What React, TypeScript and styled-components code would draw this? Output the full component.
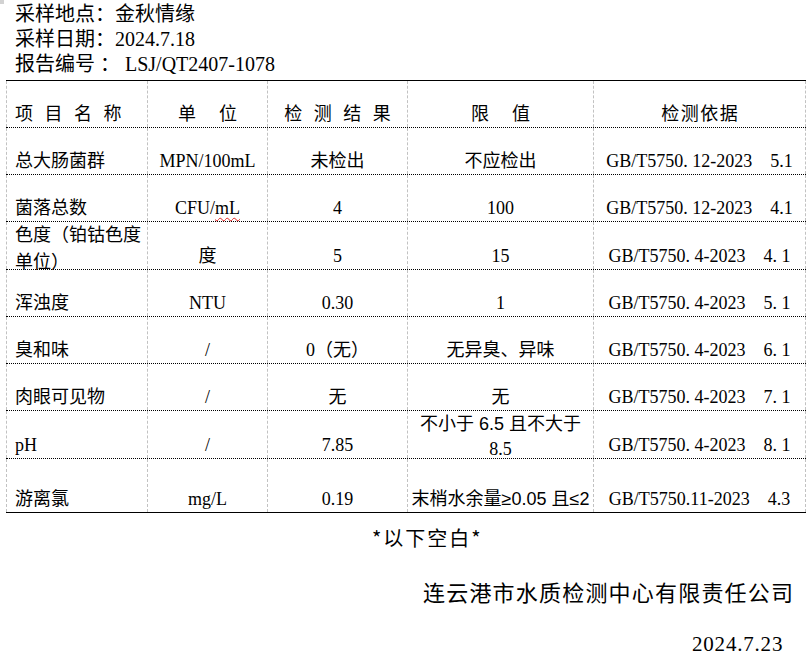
import React from 'react';
import styled, { createGlobalStyle } from 'styled-components';

const GlobalStyle = createGlobalStyle`
  html, body { margin: 0; padding: 0; background: #ffffff; }
  body {
    width: 812px;
    height: 661px;
    overflow: hidden;
    font-family: "Liberation Serif", "Noto Sans CJK SC", serif;
    color: #000000;
  }
`;

const Page = styled.div`
  position: relative;
  width: 812px;
  height: 661px;
  display: flex;
  flex-direction: column;
`;

const CornerMark = styled.div`
  position: absolute;
  left: 0;
  top: 0;
  width: 4px;
  height: 4px;
  background: #d2d2d2;
`;

const Info = styled.div`
  box-sizing: border-box;
  height: 80px;
  padding: 2px 0 0 15px;
  font-size: 20px;
  line-height: 25px;
`;

const InfoLine = styled.div`
  white-space: pre;
`;

const Table = styled.div`
  margin-left: 6px;
  width: 800px;
  border-top: 1px solid #000;
`;

const Row = styled.div<{ $h: number; $last?: boolean }>`
  display: grid;
  grid-template-columns: 141px 120px 140px 186px 213px;
  grid-template-rows: minmax(0, 1fr);
  box-sizing: border-box;
  height: ${p => p.$h}px;
  border-bottom: 1px ${p => (p.$last ? 'solid' : 'dotted')} #000;
`;

const Cell = styled.div<{ $left?: boolean; $top?: boolean; $lh?: number; $pt?: number }>`
  box-sizing: border-box;
  min-height: 0;
  border-left: 1px dashed #c2c2c2;
  &:last-child { border-right: 1px dashed #c2c2c2; }
  display: flex;
  flex-direction: column;
  justify-content: ${p => (p.$top ? 'flex-start' : 'flex-end')};
  align-items: ${p => (p.$left ? 'flex-start' : 'center')};
  padding-left: ${p => (p.$left ? '8px' : '0')};
  padding-top: ${p => p.$pt ?? 0}px;
  font-size: 18px;
  line-height: ${p => p.$lh ?? 26}px;
  white-space: pre;
  text-align: ${p => (p.$left ? 'left' : 'center')};
`;

const HeadLabel = styled.span<{ $ls: number; $center?: boolean }>`
  letter-spacing: ${p => p.$ls}px;
  padding-left: ${p => (p.$center ? p.$ls : 0)}px;
`;

const Spell = styled.span`
  text-decoration: underline wavy #e02020;
  text-decoration-thickness: 1px;
  text-underline-offset: 3px;
`;

const Sans = styled.span`
  font-family: "Liberation Sans", "Noto Sans CJK SC", sans-serif;
`;

const Footer = styled.div`
  display: flex;
  flex-direction: column;
  gap: 23px;
  padding-top: 10px;
`;

const FooterLine = styled.div<{ $x: number; $size: number; $ls: number; $sans?: boolean }>`
  padding-left: ${p => p.$x}px;
  font-size: ${p => p.$size}px;
  letter-spacing: ${p => p.$ls}px;
  line-height: 30px;
  white-space: pre;
  font-family: ${p =>
    p.$sans
      ? '"Noto Sans CJK SC", "Liberation Sans", sans-serif'
      : '"Liberation Serif", "Noto Sans CJK SC", serif'};
`;

type RowData = {
  h: number;
  name: React.ReactNode;
  nameTop?: boolean;
  unit: React.ReactNode;
  result: React.ReactNode;
  limit: React.ReactNode;
  limitTop?: boolean;
  method: string;
};

const rows: RowData[] = [
  { h: 47, name: '总大肠菌群', unit: 'MPN/100mL', result: '未检出', limit: '不应检出', method: 'GB/T5750. 12-2023    5.1' },
  { h: 47, name: '菌落总数', unit: <span>CFU/<Spell>mL</Spell></span>, result: '4', limit: '100', method: 'GB/T5750. 12-2023    4.1' },
  { h: 48, name: <>{'色度（铂钴色度'}<br />{'单位）'}</>, nameTop: true, unit: '度', result: '5', limit: '15', method: 'GB/T5750. 4-2023    4. 1' },
  { h: 47, name: '浑浊度', unit: 'NTU', result: '0.30', limit: '1', method: 'GB/T5750. 4-2023    5. 1' },
  { h: 47, name: '臭和味', unit: '/', result: '0（无）', limit: '无异臭、异味', method: 'GB/T5750. 4-2023    6. 1' },
  { h: 47, name: '肉眼可见物', unit: '/', result: '无', limit: '无', method: 'GB/T5750. 4-2023    7. 1' },
  { h: 48, name: 'pH', unit: '/', result: '7.85', limit: <><Sans>{'不小于 6.5 且不大于'}</Sans><br />{'8.5'}</>, limitTop: true, method: 'GB/T5750. 4-2023    8. 1' },
  { h: 54, name: '游离氯', unit: 'mg/L', result: '0.19', limit: <Sans>{'末梢水余量≥0.05 且≤2'}</Sans>, method: 'GB/T5750.11-2023    4.3' },
];

export default function App() {
  return (
    <>
      <GlobalStyle />
      <Page>
        <CornerMark />
        <Info>
          <InfoLine>采样地点：金秋情缘</InfoLine>
          <InfoLine>采样日期：2024.7.18</InfoLine>
          <InfoLine>{'报告编号 ： LSJ/QT2407-1078'}</InfoLine>
        </Info>
        <Table>
          <Row $h={47}>
            <Cell $left><HeadLabel $ls={3.5}>项 目 名 称</HeadLabel></Cell>
            <Cell><HeadLabel $ls={9.25} $center>单 位</HeadLabel></Cell>
            <Cell><HeadLabel $ls={3.5} $center>检 测 结 果</HeadLabel></Cell>
            <Cell><HeadLabel $ls={9.25} $center>限 值</HeadLabel></Cell>
            <Cell><HeadLabel $ls={1.5} $center>检测依据</HeadLabel></Cell>
          </Row>
          {rows.map((r, i) => (
            <Row key={i} $h={r.h} $last={i === rows.length - 1}>
              <Cell $left $top={r.nameTop} $lh={r.nameTop ? 27 : 26}>
                <span>{r.name}</span>
              </Cell>
              <Cell><span>{r.unit}</span></Cell>
              <Cell><span>{r.result}</span></Cell>
              <Cell $top={r.limitTop} $lh={r.limitTop ? 25 : 26} $pt={r.limitTop ? 1 : 0}>
                <span>{r.limit}</span>
              </Cell>
              <Cell><span>{r.method}</span></Cell>
            </Row>
          ))}
        </Table>
        <Footer>
          <FooterLine $x={372} $size={20} $ls={2} $sans>*以下空白*</FooterLine>
          <FooterLine $x={423} $size={22} $ls={1.2} $sans>连云港市水质检测中心有限责任公司</FooterLine>
          <FooterLine $x={692} $size={21} $ls={0.8}>2024.7.23</FooterLine>
        </Footer>
      </Page>
    </>
  );
}
